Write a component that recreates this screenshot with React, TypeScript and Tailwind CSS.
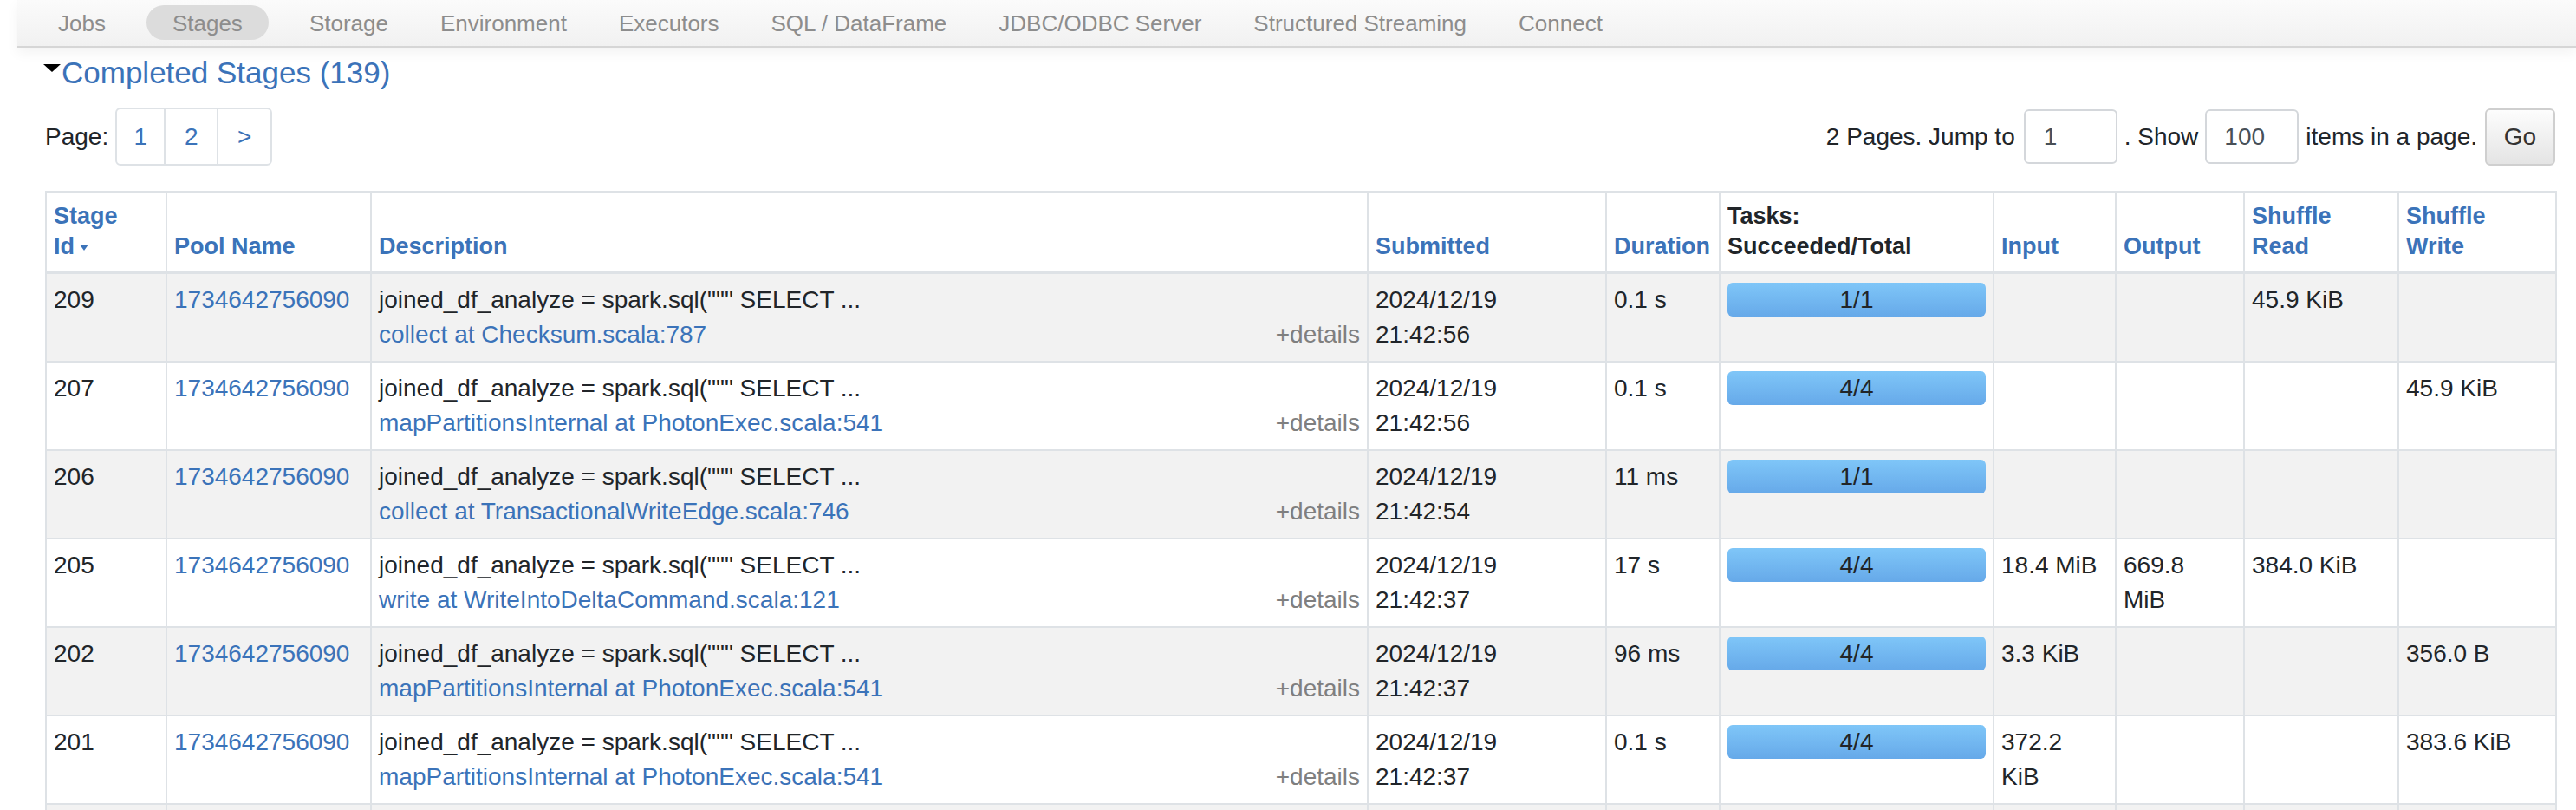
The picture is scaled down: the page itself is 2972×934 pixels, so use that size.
import React from "react";

type Row = {
  id: number;
  desc: string;
  callsite: string;
  date: string;
  time: string;
  duration: string;
  tasks: string;
  input: string;
  output: string;
  shuffleRead: string;
  shuffleWrite: string;
};

const POOL = "1734642756090";
const QUERY = 'joined_df_analyze = spark.sql(""" SELECT ...';

const rows: Row[] = [
  { id: 209, desc: QUERY, callsite: "collect at Checksum.scala:787", date: "2024/12/19", time: "21:42:56", duration: "0.1 s", tasks: "1/1", input: "", output: "", shuffleRead: "45.9 KiB", shuffleWrite: "" },
  { id: 207, desc: QUERY, callsite: "mapPartitionsInternal at PhotonExec.scala:541", date: "2024/12/19", time: "21:42:56", duration: "0.1 s", tasks: "4/4", input: "", output: "", shuffleRead: "", shuffleWrite: "45.9 KiB" },
  { id: 206, desc: QUERY, callsite: "collect at TransactionalWriteEdge.scala:746", date: "2024/12/19", time: "21:42:54", duration: "11 ms", tasks: "1/1", input: "", output: "", shuffleRead: "", shuffleWrite: "" },
  { id: 205, desc: QUERY, callsite: "write at WriteIntoDeltaCommand.scala:121", date: "2024/12/19", time: "21:42:37", duration: "17 s", tasks: "4/4", input: "18.4 MiB", output: "669.8\nMiB", shuffleRead: "384.0 KiB", shuffleWrite: "" },
  { id: 202, desc: QUERY, callsite: "mapPartitionsInternal at PhotonExec.scala:541", date: "2024/12/19", time: "21:42:37", duration: "96 ms", tasks: "4/4", input: "3.3 KiB", output: "", shuffleRead: "", shuffleWrite: "356.0 B" },
  { id: 201, desc: QUERY, callsite: "mapPartitionsInternal at PhotonExec.scala:541", date: "2024/12/19", time: "21:42:37", duration: "0.1 s", tasks: "4/4", input: "372.2\nKiB", output: "", shuffleRead: "", shuffleWrite: "383.6 KiB" },
  { id: 200, desc: QUERY, callsite: "mapPartitionsInternal at PhotonExec.scala:541", date: "2024/12/19", time: "21:42:36", duration: "0.2 s", tasks: "4/4", input: "", output: "", shuffleRead: "", shuffleWrite: "12.1 KiB" },
];

const tabs = ["Jobs", "Stages", "Storage", "Environment", "Executors", "SQL / DataFrame", "JDBC/ODBC Server", "Structured Streaming", "Connect"];

function NavBar() {
  return (
    <nav className="ml-[20px] h-[55px] border-b-2 border-[#d6d6d6] bg-gradient-to-b from-[#fbfbfb] to-[#f1f1f1] pl-[17px] pt-[6px] shadow-[0_6px_14px_rgba(0,0,0,0.05)]">
      <ul className="flex items-start">
        {tabs.map((t) =>
          t === "Stages" ? (
            <li key={t} className="mx-[17px] h-[40px] rounded-full bg-[#dcdcdc] px-[30px] text-[26px] leading-[42px] text-[#8d8d8d]">
              {t}
            </li>
          ) : (
            <li key={t} className="h-[40px] px-[30px] text-[26px] leading-[42px] text-[#8d8d8d]">
              {t}
            </li>
          )
        )}
      </ul>
    </nav>
  );
}

function SortArrow() {
  return (
    <svg width="10" height="9" viewBox="0 0 10 9" className="ml-[6px] inline-block align-middle">
      <path d="M0 1 L10 1 L5 8 Z" fill="#3b73b9" />
    </svg>
  );
}

function Pagination() {
  return (
    <div className="mt-[19px] flex h-[67px] items-center justify-between text-[28px] text-[#212529]">
      <div className="flex items-center">
        <span>Page:</span>
        <div className="ml-[8px] flex h-[67px] rounded-[6px] border-2 border-[#dee2e6] text-[#3b73b9]">
          <div className="flex w-[56px] items-center justify-center border-r-2 border-[#dee2e6]">1</div>
          <div className="flex w-[61px] items-center justify-center border-r-2 border-[#dee2e6]">2</div>
          <div className="flex w-[60px] items-center justify-center">&gt;</div>
        </div>
      </div>
      <div className="flex items-center">
        <span>2 Pages. Jump to</span>
        <div className="ml-[10px] flex h-[63px] w-[108px] items-center rounded-[6px] border-2 border-[#d4d7db] pl-[21px] text-[#495057]">1</div>
        <span className="ml-[8px]">. Show</span>
        <div className="ml-[8px] flex h-[63px] w-[108px] items-center rounded-[6px] border-2 border-[#d4d7db] pl-[20px] text-[#495057]">100</div>
        <span className="ml-[8px]">items in a page.</span>
        <button type="button" className="ml-[9px] h-[66px] w-[81px] rounded-[6px] border-2 border-[#cfcfcf] bg-gradient-to-b from-[#fdfdfd] to-[#e4e4e4] text-[28px] text-[#333]">
          Go
        </button>
      </div>
    </div>
  );
}

function Cell({ text }: { text: string }) {
  return <span className="whitespace-pre-line">{text}</span>;
}

export default function App() {
  const th = "border-2 border-b-4 border-[#dee2e6] px-[8px] pt-[10px] pb-[10px] text-left align-bottom text-[27px] font-bold leading-[35px]";
  const td = "border-2 border-[#dee2e6] px-[8px] py-[10px] align-top";
  return (
    <div className="min-h-screen bg-white font-['Liberation_Sans',Arial,sans-serif] text-[#212529]">
      <NavBar />
      <div className="pl-[52px] pr-[24px]">
        <div className="mt-[8px] flex items-start leading-[42px]">
          <svg width="20" height="9" viewBox="0 0 20 9" className="-ml-[2px] mt-[11px]">
            <path d="M0 0 L20 0 L10 9 Z" fill="#000" />
          </svg>
          <span className="ml-px text-[35px] text-[#3b73b9]">Completed Stages (139)</span>
        </div>

        <Pagination />

        <table className="mt-[29px] w-[2896px] table-fixed border-collapse border-2 border-[#dee2e6] text-[28px] leading-[40px]">
          <colgroup>
            <col className="w-[139px]" />
            <col className="w-[236px]" />
            <col className="w-[1150px]" />
            <col className="w-[275px]" />
            <col className="w-[131px]" />
            <col className="w-[316px]" />
            <col className="w-[141px]" />
            <col className="w-[148px]" />
            <col className="w-[178px]" />
            <col className="w-[182px]" />
          </colgroup>
          <thead>
            <tr className="text-[#3b73b9]">
              <th className={th}>
                Stage
                <br />
                <span className="whitespace-nowrap">
                  Id
                  <SortArrow />
                </span>
              </th>
              <th className={th}>Pool Name</th>
              <th className={th}>Description</th>
              <th className={th}>Submitted</th>
              <th className={th}>Duration</th>
              <th className={`${th} text-[#212529]`}>
                Tasks:
                <br />
                Succeeded/Total
              </th>
              <th className={th}>Input</th>
              <th className={th}>Output</th>
              <th className={th}>
                Shuffle
                <br />
                Read
              </th>
              <th className={th}>
                Shuffle
                <br />
                Write
              </th>
            </tr>
          </thead>
          <tbody>
            {rows.map((r, i) => (
              <tr key={r.id} className={i % 2 === 0 ? "bg-[#f2f2f2]" : "bg-white"}>
                <td className={td}>{r.id}</td>
                <td className={`${td} text-[#3b73b9]`}>{POOL}</td>
                <td className={td}>
                  <div>{r.desc}</div>
                  <div className="flex justify-between">
                    <span className="text-[#3b73b9]">{r.callsite}</span>
                    <span className="text-[#7f7f7f]">+details</span>
                  </div>
                </td>
                <td className={td}>
                  <div>{r.date}</div>
                  <div>{r.time}</div>
                </td>
                <td className={td}>{r.duration}</td>
                <td className={td}>
                  <div className="h-[39px] rounded-[6px] bg-gradient-to-b from-[#7fc6f8] to-[#66a9e9] text-center leading-[39px]">
                    {r.tasks}
                  </div>
                </td>
                <td className={td}>
                  <Cell text={r.input} />
                </td>
                <td className={td}>
                  <Cell text={r.output} />
                </td>
                <td className={td}>
                  <Cell text={r.shuffleRead} />
                </td>
                <td className={td}>
                  <Cell text={r.shuffleWrite} />
                </td>
              </tr>
            ))}
          </tbody>
        </table>
      </div>
    </div>
  );
}
